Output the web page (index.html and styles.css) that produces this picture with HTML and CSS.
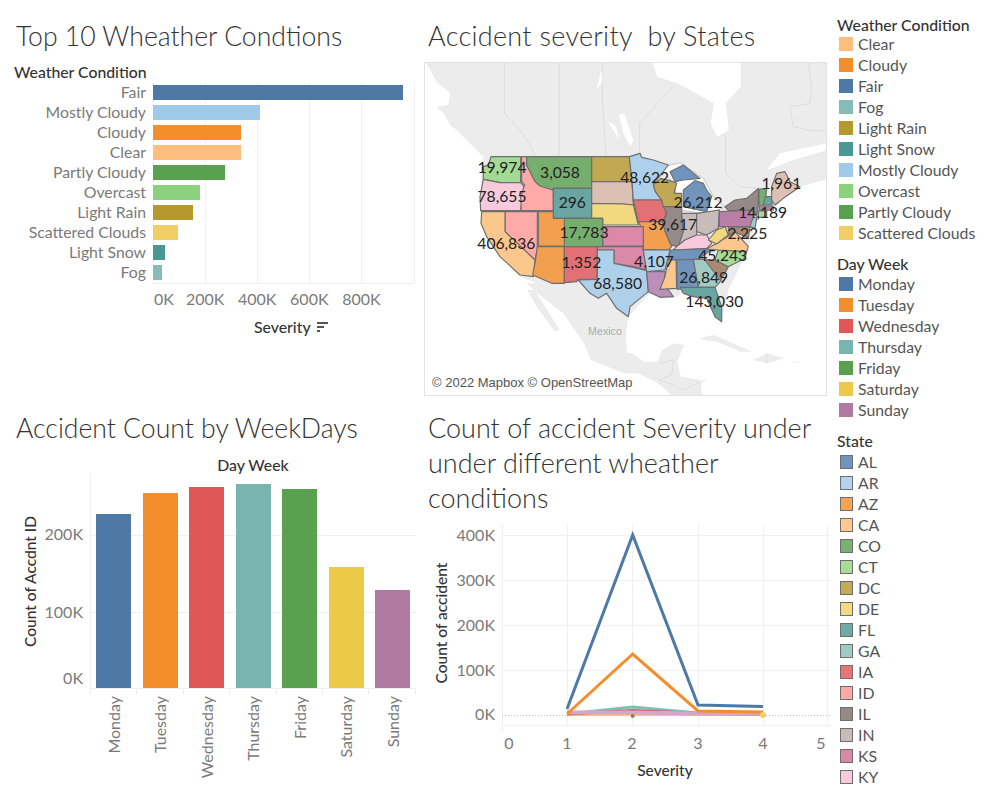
FILE: index.html
```html
<!DOCTYPE html>
<html lang="en">
<head>
<meta charset="utf-8">
<title>Accidents dashboard</title>
<link rel="stylesheet" href="styles.css">
</head>
<body>
<main class="dash">
  <section class="panel panel-a">
    <h2 class="title">Top 10 Wheather Condtions</h2>
    <div class="field-head">Weather Condition</div>
    <div class="hchart">
      <div class="hlabels">
        <div>Fair</div><div>Mostly Cloudy</div><div>Cloudy</div><div>Clear</div><div>Partly Cloudy</div>
        <div>Overcast</div><div>Light Rain</div><div>Scattered Clouds</div><div>Light Snow</div><div>Fog</div>
      </div>
      <div class="hplot">
        <div class="hbar k-blue" style="width:250px"></div>
        <div class="hbar k-ltblue" style="width:107px"></div>
        <div class="hbar k-orange" style="width:88px"></div>
        <div class="hbar k-peach" style="width:88px"></div>
        <div class="hbar k-green" style="width:72px"></div>
        <div class="hbar k-ltgreen" style="width:47px"></div>
        <div class="hbar k-olive" style="width:40px"></div>
        <div class="hbar k-yellow" style="width:25px"></div>
        <div class="hbar k-teal" style="width:12px"></div>
        <div class="hbar k-ltteal" style="width:9px"></div>
      </div>
    </div>
    <div class="hticks"><span class="first">0K</span><span>200K</span><span>400K</span><span>600K</span><span>800K</span></div>
    <div class="haxis">Severity
      <svg class="sort" width="11" height="10" viewBox="0 0 11 10"><rect width="11" height="2" y="0"/><rect width="7" height="2" y="4"/><rect width="3" height="2" y="8"/></svg>
    </div>
  </section>

  <section class="panel panel-b">
    <h2 class="title title-b title-map">Accident severity  by States</h2>
    <div class="map">
      <svg class="mapsvg" width="401" height="332" viewBox="15 39 1203 996">
        <rect class="water" x="0" y="0" width="1240" height="1050"/>
        <polygon class="land" points="10,36 20,40 50,95 90,130 85,165 50,170 70,210 110,240 160,290 190,320 185,350 180,460 185,520 240,620 300,680 400,720 625,800 690,730 760,745 790,730 860,750 885,800 905,815 925,720 985,600 1010,500 1060,480 1090,445 1140,410 1230,385 1230,36"/>
        <polygon class="land" points="322,720 345,720 362,750 420,840 405,845 350,770"/>
        <polygon class="land" points="320,700 400,700 480,690 625,800 617,860 622,910 637,910 672,935 712,935 727,900 762,880 792,885 772,935 782,980 842,990 847,1040 760,1040 732,1015 707,995 652,970 612,970 512,930 492,880 430,790 352,730"/>
        <polygon class="land" points="837,865 882,855 952,885 997,905 962,905 892,875 852,870"/>
        <polygon class="land" points="997,930 1042,910 1092,925 1042,940"/>
        <polygon class="land" points="1117,935 1142,938 1117,938"/>
        <polygon class="water" points="697,36 962,36 962,110 917,160 927,240 892,260 872,220 882,160 772,100 712,80"/>
        <polygon class="water" points="1040,360 1080,310 1222,280 1222,300 1120,330 1070,350"/>
        <polygon class="water" points="597,195 612,190 640,270 632,290 610,250"/>
        <polygon class="water" points="565,215 585,225 600,270 575,235"/>
        <polygon class="water" points="540,75 545,60 550,90 530,120"/>
        <polygon class="water" points="40,160 70,190 100,240 70,215"/>
        <polygon class="lake" points="720,352 782,338 850,385 880,440 915,472 860,492 780,480 760,400"/>
        <g class="borders">
          <polyline points="253,36 253,190 300,240 330,285 345,320"/>
          <polyline points="418,36 418,320"/>
          <polyline points="547,36 547,150 558,320"/>
          <polyline points="762,105 659,220 659,310"/>
          <polyline points="917,255 917,370 960,410 1010,415"/>
          <polyline points="1165,36 1175,110 1170,160 1110,170 1120,230 1165,240 1222,242"/>
          <polyline points="722,940 760,930 755,975 715,990 750,1000 790,1020 855,990"/>
          <polyline points="1040,910 1040,940"/>
        </g>
        <text class="mlabel" x="555" y="855">Mexico</text>
        <g class="states">
          <polygon class="s-ct" points="213,320 302,320 302,398 240,398 190,388 190,350 205,345"/>
          <polygon class="s-ky" points="190,388 240,398 302,398 312,410 302,482 182,482 180,440"/>
          <polygon class="s-id" points="305,320 320,320 320,345 345,390 400,416 400,482 304,482 302,440 314,405 305,395"/>
          <polygon class="s-co" points="320,320 515,320 515,415 400,415 398,420 360,408 345,395 320,345"/>
          <polygon class="s-fl" points="400,415 515,415 515,505 400,505"/>
          <polygon class="s-dc" points="515,320 628,320 636,395 515,395"/>
          <polygon class="s-me" points="515,395 636,395 640,465 610,462 515,460"/>
          <polygon class="s-de" points="515,460 610,462 640,465 655,525 548,525 548,505 515,505"/>
          <polygon class="s-ar" points="628,320 660,310 665,322 700,330 745,345 722,375 700,400 706,425 725,450 640,450 636,395"/>
          <polygon class="s-ia" points="640,450 725,450 740,490 728,515 655,515"/>
          <polygon class="s-al" points="750,365 790,345 840,385 790,390 765,395"/>
          <polygon class="s-dc" points="700,405 722,385 760,395 770,400 762,430 785,430 785,470 730,470 725,450 706,425"/>
          <polygon class="s-al" points="790,470 790,420 825,392 850,400 860,420 875,440 860,485"/>
          <polygon class="s-il" points="730,470 785,470 785,490 790,545 775,590 750,585 725,530 740,490"/>
          <polygon class="s-in" points="785,490 830,490 830,555 795,570 775,590 790,545"/>
          <polygon class="s-in" points="830,490 898,480 895,535 860,555 830,545"/>
          <polygon class="s-ky" points="770,590 795,570 830,555 860,555 875,580 860,595 760,600"/>
          <polygon class="s-al" points="750,600 860,597 880,595 835,628 745,630"/>
          <polygon class="s-az" points="655,515 728,515 735,545 755,590 745,600 670,598 670,545"/>
          <polygon class="s-ks" points="548,530 670,530 670,588 548,588"/>
          <polygon class="s-co" points="433,505 548,505 548,590 433,590"/>
          <polygon class="s-az" points="355,485 400,485 400,505 433,505 433,588 355,588"/>
          <polygon class="s-id" points="255,485 352,485 352,600 345,630 255,545"/>
          <polygon class="s-ca" points="185,485 255,485 255,545 345,630 340,680 300,675 240,620 200,560 183,520"/>
          <polygon class="s-az" points="352,590 433,590 433,700 395,700 338,675 345,640"/>
          <polygon class="s-ia" points="433,590 532,590 532,688 475,688 470,695 433,698"/>
          <polygon class="s-ks" points="532,590 668,590 680,660 640,650 582,640 582,600 532,600"/>
          <polygon class="s-ar" points="532,600 582,600 582,640 640,652 680,662 685,725 630,770 625,800 590,775 560,730 535,745 510,730 475,690 532,688"/>
          <polygon class="s-ar" points="670,600 750,600 735,660 680,665"/>
          <polygon class="s-la" points="680,665 735,665 735,705 760,740 720,742 685,725"/>
          <polygon class="s-ca" points="745,630 768,630 770,715 720,718 735,680"/>
          <polygon class="s-al" points="770,630 820,628 835,712 790,715 772,718"/>
          <polygon class="s-ga" points="820,628 860,628 905,690 885,712 835,712"/>
          <polygon class="s-fl" points="780,712 885,712 905,770 905,815 885,800 860,745 820,740 790,730"/>
          <polygon class="s-sc" points="855,630 885,630 925,650 915,670 900,690"/>
          <polygon class="s-ct" points="895,600 980,605 975,625 925,650 885,630"/>
          <polygon class="s-ca" points="860,597 915,565 945,545 985,590 980,605 895,600"/>
          <polygon class="s-de" points="865,570 890,540 915,530 925,555 890,582"/>
          <polygon class="s-sc" points="925,530 990,530 985,565 945,545 925,555"/>
          <polygon class="s-pa" points="898,485 1000,480 1000,530 898,530"/>
          <polygon class="s-il" points="915,470 945,450 980,445 1015,415 1015,465 1010,500 1000,480 925,482"/>
          <polygon class="s-co" points="1017,418 1040,415 1035,465 1017,465"/>
          <polygon class="s-fl" points="1036,440 1058,440 1056,465 1030,465"/>
          <polygon class="s-me" points="1055,450 1055,410 1070,370 1095,365 1110,395 1140,410 1090,445 1065,465"/>
          <polygon class="s-pa" points="1018,468 1060,468 1060,480 1018,482"/>
          <polygon class="s-ct" points="1015,483 1040,483 1040,500 1015,503"/>
          <polygon class="s-ga" points="1000,500 1010,505 1005,535 990,530"/>
        </g>
        <g class="vals">
          <text x="246" y="370">19,974</text>
          <text x="420" y="383">3,058</text>
          <text x="674" y="400">48,622</text>
          <text x="1084" y="418">1,961</text>
          <text x="457" y="475">296</text>
          <text x="246" y="455">78,655</text>
          <text x="834" y="473">26,212</text>
          <text x="1028" y="505">14,189</text>
          <text x="259" y="598">406,836</text>
          <text x="492" y="563">17,783</text>
          <text x="758" y="541">39,617</text>
          <text x="982" y="568">2,225</text>
          <text x="484" y="653">1,352</text>
          <text x="702" y="650">4,107</text>
          <text x="908" y="634">45,243</text>
          <text x="851" y="700">26,849</text>
          <text x="593" y="718">68,580</text>
          <text x="883" y="770">143,030</text>
        </g>
      </svg>
      <div class="attrib">© 2022 Mapbox © OpenStreetMap</div>
    </div>
  </section>

  <aside class="legends">
    <h3 class="lg-title">Weather Condition</h3>
    <ul class="lg">
      <li><i class="k-peach"></i>Clear</li>
      <li><i class="k-orange"></i>Cloudy</li>
      <li><i class="k-blue"></i>Fair</li>
      <li><i class="k-ltteal"></i>Fog</li>
      <li><i class="k-olive"></i>Light Rain</li>
      <li><i class="k-teal"></i>Light Snow</li>
      <li><i class="k-ltblue"></i>Mostly Cloudy</li>
      <li><i class="k-ltgreen"></i>Overcast</li>
      <li><i class="k-green"></i>Partly Cloudy</li>
      <li><i class="k-yellow"></i>Scattered Clouds</li>
    </ul>
    <h3 class="lg-title lg-gap">Day Week</h3>
    <ul class="lg lg-day">
      <li><i class="k-blue"></i>Monday</li>
      <li><i class="k-orange"></i>Tuesday</li>
      <li><i class="k-red"></i>Wednesday</li>
      <li><i class="k-thu"></i>Thursday</li>
      <li><i class="k-green"></i>Friday</li>
      <li><i class="k-sat"></i>Saturday</li>
      <li><i class="k-sun"></i>Sunday</li>
    </ul>
    <h3 class="lg-title lg-gap2">State</h3>
    <ul class="lg lg-state">
      <li><i class="t-al"></i>AL</li>
      <li><i class="t-ar"></i>AR</li>
      <li><i class="t-az"></i>AZ</li>
      <li><i class="t-ca"></i>CA</li>
      <li><i class="t-co"></i>CO</li>
      <li><i class="t-ct"></i>CT</li>
      <li><i class="t-dc"></i>DC</li>
      <li><i class="t-de"></i>DE</li>
      <li><i class="t-fl"></i>FL</li>
      <li><i class="t-ga"></i>GA</li>
      <li><i class="t-ia"></i>IA</li>
      <li><i class="t-id"></i>ID</li>
      <li><i class="t-il"></i>IL</li>
      <li><i class="t-in"></i>IN</li>
      <li><i class="t-ks"></i>KS</li>
      <li><i class="t-ky"></i>KY</li>
    </ul>
  </aside>

  <section class="panel panel-c">
    <h2 class="title">Accident Count by WeekDays</h2>
    <div class="vhead">Day Week</div>
    <div class="vchart">
      <div class="vytitle"><span>Count of Accdnt ID</span></div>
      <div class="vyticks"><span class="v200">200K</span><span class="v100">100K</span><span class="v0">0K</span></div>
      <div class="vmain">
        <div class="vplot">
          <div class="vbar k-blue" style="height:174px"></div>
          <div class="vbar k-orange" style="height:195px"></div>
          <div class="vbar k-red" style="height:201px"></div>
          <div class="vbar k-thu" style="height:204px"></div>
          <div class="vbar k-green" style="height:199px"></div>
          <div class="vbar k-sat" style="height:121px"></div>
          <div class="vbar k-sun" style="height:98px"></div>
        </div>
        <div class="vlabels">
          <div><span>Monday</span></div><div><span>Tuesday</span></div><div><span>Wednesday</span></div><div><span>Thursday</span></div><div><span>Friday</span></div><div><span>Saturday</span></div><div><span>Sunday</span></div>
        </div>
      </div>
    </div>
  </section>

  <section class="panel panel-d">
    <h2 class="title title-b title-wrap">Count of accident Severity under under different wheather conditions</h2>
    <svg class="linesvg" width="406" height="285" viewBox="424 515 406 285">
      <g class="grid">
        <line x1="502.5" y1="524" x2="502.5" y2="732"/>
        <line x1="567.5" y1="524" x2="567.5" y2="725"/>
        <line x1="632.5" y1="524" x2="632.5" y2="725"/>
        <line x1="698.5" y1="524" x2="698.5" y2="725"/>
        <line x1="763.5" y1="524" x2="763.5" y2="725"/>
        <line x1="827.5" y1="524" x2="827.5" y2="725"/>
        <line x1="502" y1="535.5" x2="830" y2="535.5"/>
        <line x1="502" y1="580.5" x2="830" y2="580.5"/>
        <line x1="502" y1="625.5" x2="830" y2="625.5"/>
        <line x1="502" y1="670.5" x2="830" y2="670.5"/>
        <line x1="502" y1="725.5" x2="830" y2="725.5"/>
      </g>
      <line class="zero" x1="502" y1="715.5" x2="830" y2="715.5"/>
      <g class="lines">
        <polyline class="l-peach" points="567,714.5 632.7,714.5 698,714.5 763,714.5"/>
        <polyline class="l-thu" points="567,714 632.7,707 698,713 763,714"/>
        <polyline class="l-red" points="567,714 632.7,710.5 698,713.5 763,714"/>
        <polyline class="l-pink" points="567,712.5 632.7,712.5 698,713.5 763,713.5"/>
        <polyline class="l-orange" points="567,714 632.7,654 698,711 763,712"/>
        <polyline class="l-blue" points="567,709 632.7,535 698,705 763,706.5"/>
      </g>
      <circle class="dot-sat" cx="763" cy="715" r="3"/>
      <circle class="dot-brown" cx="632.7" cy="716" r="2"/>
      <g class="ytick">
        <text x="495" y="541">400K</text>
        <text x="495" y="586">300K</text>
        <text x="495" y="631">200K</text>
        <text x="495" y="676">100K</text>
        <text x="495" y="720">0K</text>
      </g>
      <g class="xtick">
        <text x="509" y="749">0</text>
        <text x="567" y="749">1</text>
        <text x="632" y="749">2</text>
        <text x="698" y="749">3</text>
        <text x="763" y="749">4</text>
        <text x="821" y="749">5</text>
      </g>
      <text class="axt" x="665" y="776">Severity</text>
      <text class="axt" transform="translate(447 623) rotate(-90)">Count of accident</text>
    </svg>
  </section>
</main>
</body>
</html>
```

FILE: styles.css
```css
* { box-sizing: border-box; }
html, body { margin: 0; padding: 0; background: #fff; }
body { width: 1000px; height: 800px; overflow: hidden; font-family: Lato, "Open Sans", sans-serif; color: #333; }

.dash {
  display: grid;
  grid-template-columns: 424px 406px 170px;
  grid-template-rows: 392px 408px;
  width: 1000px;
  height: 800px;
}
.panel { min-width: 0; padding-top: 18px; }
.panel-c, .panel-d { grid-row: 2; padding-top: 18px; }
.panel-c { grid-column: 1; }
.panel-d { grid-column: 2; }
.legends { grid-column: 3; grid-row: 1 / span 2; padding: 16px 0 0 7px; }

.title {
  margin: 1px 0 -1px 16px;
  font-size: 26.6px;
  line-height: 35px;
  font-weight: 300;
  color: #333;
  white-space: nowrap;
}
.title-b { margin: 0 0 0 4px; font-size: 27px; }
.title-map { white-space: pre; letter-spacing: .3px; }
.title-wrap { white-space: normal; width: 395px; }

/* horizontal bars */
.field-head { margin: 10px 0 0 14px; font-size: 15.8px; line-height: 18px; font-weight: 500; color: #333; height: 19px; white-space: nowrap; }
.hchart { display: flex; height: 202px; }
.hlabels { width: 153px; padding: 2px 7px 0 0; display: flex; flex-direction: column; text-align: right; font-size: 15.8px; color: #7a7a7a; }
.hlabels div { height: 20px; line-height: 15px; white-space: nowrap; flex: none; }
.hplot {
  width: 262px;
  padding-top: 3px;
  display: flex;
  flex-direction: column;
  gap: 5px;
  border-bottom: 1px solid #f0f0f0;
  background: repeating-linear-gradient(90deg, #f0f0f0 0 1px, transparent 1px 52.1px);
}
.hbar { height: 15px; flex: none; }
.hticks { display: flex; margin: 6px 0 0 153px; font-size: 16px; line-height: 18px; color: #7a7a7a; }
.hticks span { width: 52.1px; text-align: center; white-space: nowrap; }
.hticks .first { text-align: left; padding-left: 1px; margin-right: -26px; }
.haxis { margin: 10px 0 0 254px; font-size: 15.8px; line-height: 18px; font-weight: 500; color: #333; display: flex; align-items: center; gap: 6px; }
.sort { fill: #555; }

/* map */
.map { position: relative; width: 403px; height: 334px; margin-top: 9px; border: 1px solid #e3e3e3; }
.mapsvg { display: block; }
.water { fill: #fff; }
.land { fill: #ececec; }
.lake { fill: #fff; stroke: #aaa; stroke-width: 2; }
.borders polyline { fill: none; stroke: #d4d4d4; stroke-width: 2; }
.mlabel { font-family: "Liberation Sans", Arial, sans-serif; font-size: 32px; fill: #aaa; text-anchor: middle; }
.states polygon { stroke: #6e6e6e; stroke-width: 3.5; stroke-linejoin: round; }
.vals text { font-size: 47px; fill: #222; text-anchor: middle; }
.attrib {
  position: absolute; left: 3px; bottom: 4px; padding: 0 4px;
  font-family: "Liberation Sans", Arial, sans-serif; font-size: 13px; line-height: 17px;
  color: #555; background: rgba(255,255,255,.7); white-space: nowrap;
}
.s-al { fill: #7094bb; } .s-ar { fill: #aed0ea; } .s-az { fill: #f2a04f; } .s-ca { fill: #fcc78d; }
.s-co { fill: #76ae6d; } .s-ct { fill: #a3da94; } .s-dc { fill: #c2a852; } .s-de { fill: #f2d87f; }
.s-fl { fill: #69a5a1; } .s-ga { fill: #a0cbc4; } .s-ia { fill: #e37074; } .s-id { fill: #ffa9a9; }
.s-il { fill: #958a88; } .s-in { fill: #c7bcba; } .s-ks { fill: #db88a9; } .s-ky { fill: #f9cadb; }
.s-la { fill: #bc8fba; } .s-me { fill: #dcc0b4; } .s-pa { fill: #b97fa8; } .s-sc { fill: #a98b73; }

/* legends */
.lg-title { margin: 0; font-size: 15.8px; line-height: 18px; font-weight: 500; color: #333; white-space: nowrap; }
.lg-gap { margin-top: 12px; }
.lg-gap2 { margin-top: 12px; }
.lg { list-style: none; margin: -1px 0 0; padding: 0 0 0 2px; }
.lg-day { margin-top: 0; }
.lg li { display: flex; align-items: center; height: 21px; font-size: 15.8px; color: #555; white-space: nowrap; }
.lg i { width: 14px; height: 14px; margin-right: 5px; flex: none; }
.lg-state { padding-left: 3px; margin-top: 1px; }
.lg-state i { width: 13px; height: 14px; margin-right: 5px; border: 1px solid #6e6e6e; }

.k-blue { background: #4e79a7; } .k-ltblue { background: #a0cbe8; } .k-orange { background: #f28e2b; }
.k-peach { background: #ffbe7d; } .k-green { background: #59a14f; } .k-ltgreen { background: #8cd17d; }
.k-olive { background: #b6992d; } .k-yellow { background: #f1ce63; } .k-teal { background: #499894; }
.k-ltteal { background: #86bcb6; } .k-red { background: #e15759; } .k-thu { background: #79b5b0; }
.k-sat { background: #edc948; } .k-sun { background: #b07aa1; }

.t-al { background: #7094bb; } .t-ar { background: #b3d4ec; } .t-az { background: #f7a350; } .t-ca { background: #fec88e; }
.t-co { background: #79b270; } .t-ct { background: #a6dc97; } .t-dc { background: #c4aa54; } .t-de { background: #f4d983; }
.t-fl { background: #6eaba6; } .t-ga { background: #a0cbc4; } .t-ia { background: #e97577; } .t-id { background: #ffa9a9; }
.t-il { background: #958a88; } .t-in { background: #c7bcba; } .t-ks { background: #db88a9; } .t-ky { background: #f9cadb; }

/* column chart */
.vhead { margin: 11px 0 0; padding-left: 90px; width: 416px; height: 18px; text-align: center; font-size: 15.8px; line-height: 18px; font-weight: 500; color: #333; }
.vchart { display: flex; }
.vytitle { width: 36px; padding: 0 0 0 21px; height: 215px; display: flex; align-items: center; }
.vytitle span, .vlabels span { writing-mode: vertical-rl; transform: rotate(180deg); white-space: nowrap; }
.vytitle span { font-size: 15.5px; line-height: 18px; font-weight: 500; color: #333; }
.vyticks { width: 54px; padding-right: 7px; display: flex; flex-direction: column; align-items: flex-end; font-size: 16px; line-height: 18px; color: #7a7a7a; }
.v200 { margin-top: 51px; }
.v100 { margin-top: 60px; }
.v0 { margin-top: 48px; }
.vmain { width: 326px; }
.vplot {
  height: 215px;
  padding-left: 5px;
  display: flex;
  align-items: flex-end;
  gap: 11.5px;
  border-left: 1px solid #f0f0f0;
  border-bottom: 1px solid #f0f0f0;
  background:
    linear-gradient(#f0f0f0, #f0f0f0) 0 61px / 100% 1px no-repeat,
    linear-gradient(#f0f0f0, #f0f0f0) 0 138px / 100% 1px no-repeat;
}
.vbar { width: 35px; flex: none; }
.vlabels {
  display: flex;
  background: repeating-linear-gradient(90deg, #eee 0 1px, transparent 1px 46.4px) 0 0 / 100% 5px no-repeat;
  font-size: 16px;
  color: #7a7a7a;
}
.vlabels div { width: 46.5px; flex: none; padding-top: 7px; display: flex; justify-content: center; align-items: flex-start; }

/* line chart */
.linesvg { display: block; }
.grid line { stroke: #f0f0f0; stroke-width: 1; }
.zero { stroke: #bbb; stroke-width: 1; stroke-dasharray: 1 2; }
.lines polyline { fill: none; stroke-width: 3; stroke-linejoin: miter; }
.lines .l-pink { stroke-width: 4; }
.l-blue { stroke: #4e79a7; } .l-orange { stroke: #f28e2b; } .l-thu { stroke: #86bcb6; }
.l-red { stroke: #e15759; } .l-pink { stroke: #d4a6c8; } .l-peach { stroke: #ffbe7d; }
.dot-sat { fill: #f1ce63; }
.dot-brown { fill: #9c755f; }
.ytick text { font-size: 16px; fill: #7a7a7a; text-anchor: end; }
.xtick text { font-size: 16px; fill: #7a7a7a; text-anchor: middle; }
.axt { font-size: 15.5px; font-weight: 500; fill: #333; text-anchor: middle; }
```
